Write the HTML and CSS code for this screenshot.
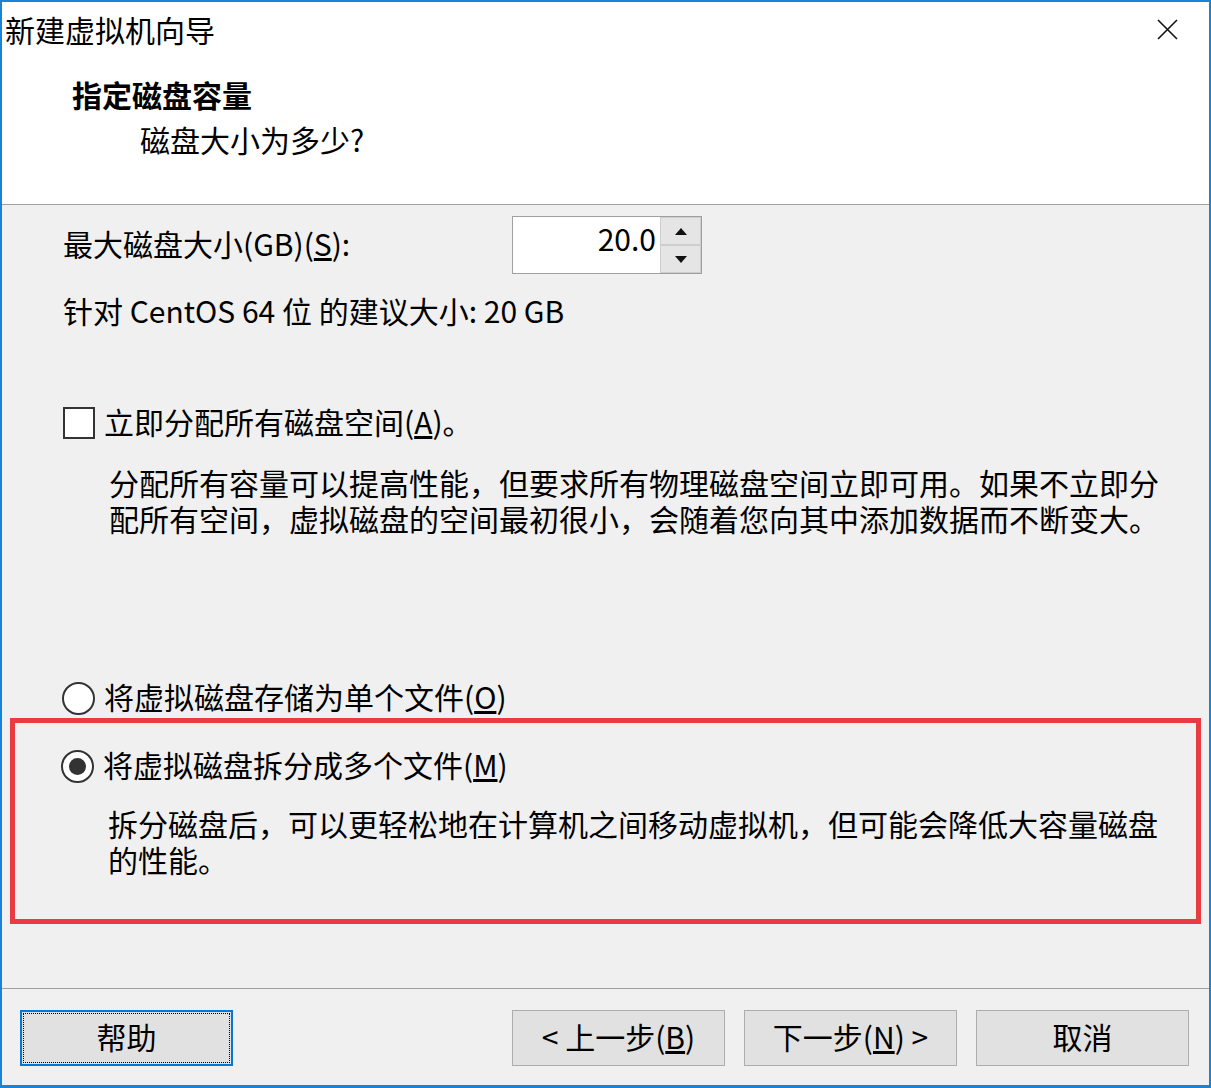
FILE: index.html
```html
<!DOCTYPE html>
<html lang="zh-CN">
<head>
    <meta charset="UTF-8">
    <meta name="viewport" content="width=device-width, initial-scale=1.0">
    <title>新建虚拟机向导</title>
    <link rel="stylesheet" href="styles.css">
</head>
<body>
    <div class="window">
        <div class="titlebar">
            <span class="title">新建虚拟机向导</span>
            <div class="close">
                <svg width="21" height="21" viewBox="0 0 21 21">
                    <path d="M1 1 L20 20 M20 1 L1 20" stroke="#111" stroke-width="1.6" fill="none"/>
                </svg>
            </div>
        </div>

        <div class="header">
            <h1>指定磁盘容量</h1>
            <p class="subtitle">磁盘大小为多少?</p>
        </div>

        <div class="content">
            <div class="size-row">
                <span class="label">最大磁盘大小(GB)(<u>S</u>):</span>
                <div class="spin">
                    <div class="spin-value">20.0</div>
                    <div class="spin-buttons">
                        <div class="spin-btn">
                            <svg width="12" height="7" viewBox="0 0 12 7"><path d="M0 7 L6 0 L12 7 Z" fill="#111"/></svg>
                        </div>
                        <div class="spin-btn">
                            <svg width="12" height="7" viewBox="0 0 12 7"><path d="M0 0 L6 7 L12 0 Z" fill="#111"/></svg>
                        </div>
                    </div>
                </div>
            </div>

            <p class="hint">针对 CentOS 64 位 的建议大小: 20 GB</p>

            <div class="option check-row">
                <span class="checkbox"></span>
                <span class="label">立即分配所有磁盘空间(<u>A</u>)。</span>
            </div>
            <p class="desc">分配所有容量可以提高性能，但要求所有物理磁盘空间立即可用。如果不立即分<br>配所有空间，虚拟磁盘的空间最初很小，会随着您向其中添加数据而不断变大。</p>

            <div class="option radio-row">
                <span class="radio"></span>
                <span class="label">将虚拟磁盘存储为单个文件(<u>O</u>)</span>
            </div>

            <!-- annotation box -->
            <div class="highlight">
                <div class="option">
                    <span class="radio checked"></span>
                    <span class="label">将虚拟磁盘拆分成多个文件(<u>M</u>)</span>
                </div>
                <p class="desc">拆分磁盘后，可以更轻松地在计算机之间移动虚拟机，但可能会降低大容量磁盘<br>的性能。</p>
            </div>
        </div>

        <div class="footer">
            <button class="btn focused">帮助</button>
            <div class="nav">
                <button class="btn">&lt; 上一步(<u>B</u>)</button>
                <button class="btn">下一步(<u>N</u>) &gt;</button>
                <button class="btn">取消</button>
            </div>
        </div>
    </div>
</body>
</html>
```

FILE: styles.css
```css
body {
    margin: 0;
    font-family: "Noto Sans CJK SC", sans-serif;
    font-size: 30px;
    color: #000;
    background: #f0f0f0;
}
p, h1 {
    margin: 0;
}
.window {
    box-sizing: border-box;
    width: 1211px;
    height: 1088px;
    border: 2px solid #1883d7;
    border-bottom-width: 3px;
    display: flex;
    flex-direction: column;
    background: #f0f0f0;
}
.titlebar {
    height: 58px;
    background: white;
    display: flex;
    align-items: center;
    justify-content: space-between;
    padding-left: 3px;
}
.title {
    line-height: 36px;
    padding-bottom: 4px;
}
.close {
    width: 84px;
    height: 58px;
    padding-bottom: 4px;
    box-sizing: border-box;
    display: flex;
    align-items: center;
    justify-content: center;
}
.header {
    height: 145px;
    background: white;
    border-bottom: 1px solid #a0a0a0;
    padding-top: 16px;
    box-sizing: border-box;
}
h1 {
    font-size: 30px;
    font-weight: bold;
    line-height: 36px;
    padding-left: 70px;
}
.subtitle {
    line-height: 36px;
    margin-top: 9px;
    padding-left: 138px;
}
.content {
    flex: 1;
    padding: 11px 0 0 61px;
}
.label {
    padding-bottom: 4px;
}
.size-row {
    display: grid;
    grid-template-columns: 449px 190px;
    align-items: center;
    height: 58px;
    line-height: 36px;
}
.spin {
    display: flex;
    height: 58px;
    box-sizing: border-box;
    border: 1px solid #a0a0a0;
}
.spin-value {
    flex: 1;
    background: white;
    text-align: right;
    padding-right: 4px;
    line-height: 42px;
}
.spin-buttons {
    width: 41px;
    display: flex;
    flex-direction: column;
}
.spin-btn {
    flex: 1;
    background: #e5e5e5;
    border: 1px solid #cdcdcd;
    display: flex;
    align-items: center;
    justify-content: center;
}
.hint {
    margin-top: 18px;
    line-height: 36px;
}
.option {
    display: flex;
    align-items: center;
    gap: 9px;
    height: 36px;
    line-height: 36px;
}
.check-row {
    margin-top: 77px;
}
.checkbox {
    box-sizing: border-box;
    width: 32px;
    height: 32px;
    border: 2px solid #333;
    background: white;
}
.radio-row {
    margin-top: 144px;
    margin-left: -1px;
}
.radio {
    box-sizing: border-box;
    width: 33px;
    height: 33px;
    border: 2px solid #333;
    border-radius: 50%;
    background: white;
    display: flex;
    align-items: center;
    justify-content: center;
}
.radio.checked::after {
    content: "";
    width: 17px;
    height: 17px;
    border-radius: 50%;
    background: #333;
}
.desc {
    margin-top: 23px;
    margin-left: 46px;
    line-height: 36px;
}
.highlight {
    margin: 2px 8px 0 -53px;
    border: 5px solid #e93b41;
    padding: 25px 0 42px 46px;
}
.highlight .desc {
    margin-top: 21px;
    margin-left: 47px;
}
.footer {
    height: 97px;
    box-sizing: border-box;
    border-top: 1px solid #a0a0a0;
    padding: 21px 20px 0 18px;
    display: flex;
    justify-content: space-between;
    align-items: flex-start;
}
.nav {
    display: flex;
    gap: 19px;
}
.btn {
    width: 213px;
    height: 56px;
    font-family: "Noto Sans CJK SC", sans-serif;
    font-size: 30px;
    color: #000;
    background: #e1e1e1;
    border: 1px solid #adadad;
    padding: 0 0 4px;
    line-height: 36px;
}
.btn.focused {
    border: 2px solid #0078d7;
    outline: 1px dotted #000;
    outline-offset: -4px;
}
```
